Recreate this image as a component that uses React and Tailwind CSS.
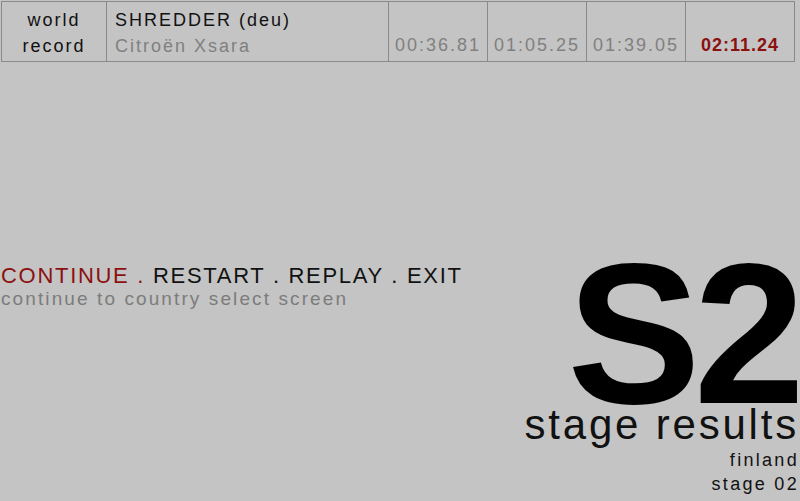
export default function App() {
  const splits = ["00:36.81", "01:05.25", "01:39.05"];

  return (
    <div
      className="relative w-[800px] h-[501px] overflow-hidden bg-[#c4c4c4] text-[#111]"
      style={{ fontFamily: '"Liberation Sans", Arial, sans-serif' }}
    >
      <div className="pt-px pl-px pr-[5px]">
        <div className="flex h-[61px] border border-[#8a8a8a] text-[18px] tracking-[2px]">
          <div className="w-[105px] flex flex-col items-center justify-center pt-[2px] leading-[26px] border-r border-[#8a8a8a]">
            <span>world</span>
            <span>record</span>
          </div>
          <div className="w-[282px] flex flex-col justify-center pt-[2px] pl-[8px] leading-[26px] border-r border-[#8a8a8a]">
            <span>SHREDDER (deu)</span>
            <span className="text-[#808080]">Citroën Xsara</span>
          </div>
          {splits.map((t) => (
            <div
              key={t}
              className="w-[99px] flex items-end justify-center pb-[2px] text-[#808080] border-r border-[#8a8a8a]"
            >
              {t}
            </div>
          ))}
          <div className="flex-1 flex items-end justify-center pb-[2px] font-bold text-[#8b1111] tracking-[1px]">
            02:11.24
          </div>
        </div>
      </div>

      <div className="flex justify-between mt-[200px]">
        <div className="pl-[1px] pt-[1px]">
          <div className="text-[22px] leading-[26px] tracking-[1.7px]">
            <span className="text-[#8b1111]">CONTINUE .</span> RESTART . REPLAY . EXIT
          </div>
          <div className="text-[19px] leading-[20px] tracking-[2.1px] text-[#7c7c7c]">
            continue to country select screen
          </div>
        </div>

        <div className="flex flex-col items-end pr-[2px] text-right">
          <div className="text-[200px] font-bold leading-[150px] tracking-[-7px] mt-[-3px] text-black">
            S2
          </div>
          <div className="text-[42px] leading-[44px] tracking-[2.8px] mt-[-6px] mr-[-1px]">
            stage results
          </div>
          <div className="text-[18px] leading-[24px] tracking-[2.3px] mt-[1px] mr-[-1px]">finland</div>
          <div className="text-[18px] leading-[24px] tracking-[2.3px] mr-[-1px]">stage 02</div>
        </div>
      </div>
    </div>
  );
}
